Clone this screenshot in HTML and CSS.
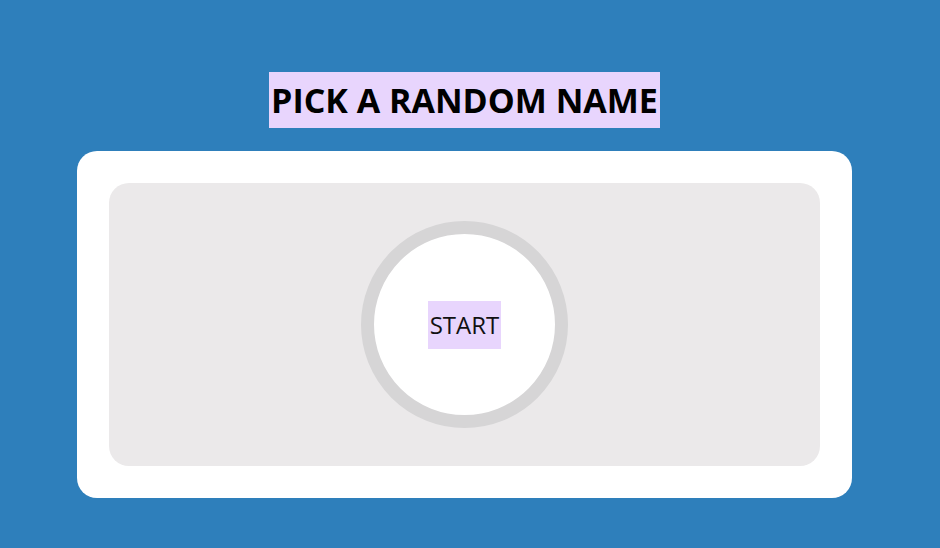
FILE: index.html
```html
<!DOCTYPE html>
<html>
<head>
<meta charset="utf-8">
<link rel="stylesheet" href="styles.css">
</head>
<body>
<div class="page">
  <h1 class="title">PICK A RANDOM NAME</h1>
  <div class="card">
    <div class="stage">
      <div class="wheel">
        <span class="start">START</span>
      </div>
    </div>
  </div>
</div>
</body>
</html>
```

FILE: styles.css
```css
html, body {
  margin: 0;
  padding: 0;
  background: #2e7fbb;
  height: 100%;
}
body {
  font-family: "Open Sans", "Noto Sans", sans-serif;
}
.page {
  width: 775px;
  margin-left: 77px;
  padding-top: 72px;
  display: flex;
  flex-direction: column;
  align-items: center;
}
.title {
  margin: 0;
  background: #e8d5fd;
  color: #000;
  font-size: 34px;
  font-weight: 700;
  line-height: 56px;
  height: 56px;
  padding: 0 2px;
  white-space: nowrap;
}
.card {
  margin-top: 23px;
  align-self: stretch;
  background: #fff;
  border-radius: 20px;
  padding: 32px;
}
.stage {
  background: #ebe9ea;
  border-radius: 20px;
  height: 283px;
  display: flex;
  align-items: center;
  justify-content: center;
}
.wheel {
  box-sizing: border-box;
  width: 207px;
  height: 207px;
  border-radius: 50%;
  border: 13px solid #d6d5d6;
  background: #fff;
  display: flex;
  align-items: center;
  justify-content: center;
}
.start {
  background: #e8d5fd;
  color: #111;
  font-size: 24px;
  line-height: 48px;
  padding: 0 2px;
}
```
